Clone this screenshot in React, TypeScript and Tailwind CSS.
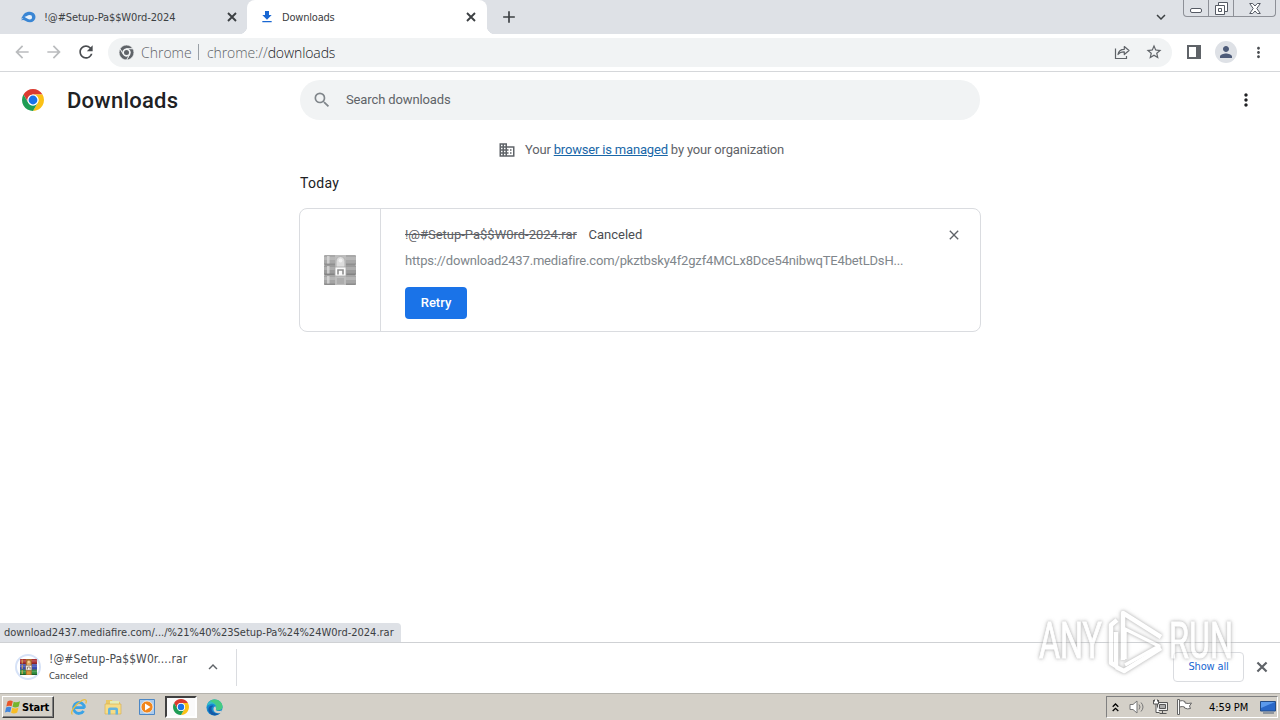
import React from "react";
import clsx from "clsx";
import {
  MdAdd,
  MdArrowBack,
  MdArrowForward,
  MdBusiness,
  MdClose,
  MdExpandLess,
  MdExpandMore,
  MdFileDownload,
  MdMoreVert,
  MdPerson,
  MdRefresh,
  MdSearch,
  MdStarBorder,
} from "react-icons/md";

const UI_FONT = "font-['DejaVu_Sans_Condensed','DejaVu_Sans',sans-serif] [font-stretch:condensed]";

const WEDGE = "M0-6H10.39A12 12 0 0 0-10.39-6L-5.2 3A6 6 0 0 1 0-6Z";

function ChromeLogo({ className, mono = false }: { className?: string; mono?: boolean }) {
  const colors = mono ? ["#5f6368", "#5f6368", "#5f6368"] : ["#db3b30", "#fbc116", "#1f9d55"];
  return (
    <svg viewBox="-12 -12 24 24" className={className}>
      {colors.map((color, i) => (
        <path
          key={i}
          d={WEDGE}
          fill={color}
          stroke={mono ? "#f1f3f4" : "none"}
          strokeWidth={mono ? 1.2 : 0}
          transform={`rotate(${i * 120})`}
        />
      ))}
      <circle r="6" fill={mono ? "#f1f3f4" : "#fff"} />
      <circle r={mono ? 4 : 4.8} fill={mono ? "#5f6368" : "#1a73e8"} />
    </svg>
  );
}

function BoldClose({ className }: { className?: string }) {
  return (
    <svg viewBox="0 0 14 14" className={className} fill="none" stroke="currentColor" strokeWidth="1.900">
      <path d="M3 3l8 8M11 3l-8 8" />
    </svg>
  );
}

function MediafireIcon() {
  return (
    <svg viewBox="0 0 16 12" className="h-3 w-4">
      <path
        d="M0 9.200C1.500 8.800 2.600 8 3.500 7.200L1 7.400C2.800 5.800 3 3.600 5 2.100 6.600.9 8.200.7 10 .7A5.500 5.300 0 0 1 10 11.300C6.600 11.300 5.300 9.400 3.400 9.100Z"
        fill="#3a86d4"
      />
      <path
        d="M4.500 5.800C6.500 5.800 7.200 4 9.900 4A2.200 2.200 0 0 1 9.900 8.400C8 8.400 7.200 7.200 5.800 6.800Z"
        fill="#e8f1fb"
      />
    </svg>
  );
}

// WinRAR stack of books held together by a belt
function RarIcon({ className, gray = false }: { className?: string; gray?: boolean }) {
  const rows = gray ? ["#a8a8a8", "#9b9b9b", "#a5a5a5"] : ["#a82f35", "#3b4db5", "#2b8a3c"];
  return (
    <svg viewBox="0 0 32 30" className={className}>
      {rows.map((color, i) => (
        <g key={color}>
          <rect x="0" y={i * 10} width="32" height="10" rx="1" fill={color} />
          <rect x="0" y={i * 10 + 2} width="32" height="3" fill="#fff" opacity=".18" />
          <rect x="0" y={i * 10 + 8.500} width="32" height="1.500" fill="#000" opacity={gray ? 0.15 : 0.4} />
          <rect x="3" y={i * 10 + 1} width="2.500" height="7.500" fill={gray ? "#d8d8d8" : "#d9b04d"} opacity=".8" />
        </g>
      ))}
      <rect x="11" y="0" width="11" height="30" fill={gray ? "#bdbdbd" : "#b5702c"} />
      <path d="M12 14V6a4.500 4.500 0 0 1 9 0v8" fill={gray ? "#dcdcdc" : "#e0a860"} stroke={gray ? "#b0b0b0" : "#7c4a1c"} />
      <circle cx="16.500" cy="5.500" r="2" fill={gray ? "#f0f0f0" : "#f6d9a0"} />
      <path d="M11 12h11v9H11z" fill={gray ? "#fafafa" : "#fbf7ee"} stroke={gray ? "#a6a6a6" : "#6b5a44"} strokeWidth=".8" />
      <path d="M14 19.500V15h5v4.500" fill="none" stroke={gray ? "#8f8f8f" : "#84705a"} strokeWidth="1.600" />
      <rect x="13" y="23" width="7" height="6" fill={gray ? "#adadad" : "#d9983d"} />
    </svg>
  );
}

function WindowButtons() {
  return (
    <div className="flex h-[17px] w-[93px] self-start rounded-b-[4px] border border-t-0 border-[#8d9097] bg-[#dee1e6]">
      <div className="flex w-[25px] items-end justify-center border-r border-[#8d9097] pb-[3px]">
        <div className="h-[5px] w-[12px] rounded-[2px] border border-[#555a64] bg-white" />
      </div>
      <div className="flex w-[25px] items-center justify-center border-r border-[#8d9097]">
        <svg viewBox="0 0 13 13" className="h-[13px] w-[13px]" fill="#fff" stroke="#555a64">
          <path d="M3.500.5h9v9h-9z" />
          <path d="M.5 3.500h9v9h-9z" />
          <path d="M3.500 6.500h3v3h-3z" />
        </svg>
      </div>
      <div className="flex flex-1 items-center justify-center">
        <svg viewBox="0 0 12 11" className="h-[11px] w-[12px]" fill="#fff" stroke="#555a64">
          <path d="M.7.5h3L6 3l2.300-2.500h3L7.800 5.500l3.500 5h-3L6 8l-2.300 2.500h-3l3.500-5z" />
        </svg>
      </div>
    </div>
  );
}

function TabStrip() {
  return (
    <div className={clsx("flex h-[34px] bg-[#dee1e6] text-[11px] text-[#3c4043]", UI_FONT)}>
      <div className="flex w-[247px] items-center pl-5">
        <MediafireIcon />
        <span className="ml-2 w-[181px] pt-0.5 whitespace-nowrap tracking-[-0.1px]">!@#Setup-Pa$$W0rd-2024</span>
        <BoldClose className="h-[14px] w-[14px]" />
      </div>
      <div className="relative flex w-60 items-center rounded-t-lg bg-white pl-3">
        <div className="absolute bottom-0 -left-2 h-2 w-2 bg-[radial-gradient(circle_at_0_0,#dee1e6_8px,white_8.500px)]" />
        <div className="absolute -right-2 bottom-0 h-2 w-2 bg-[radial-gradient(circle_at_100%_0,#dee1e6_8px,white_8.500px)]" />
        <MdFileDownload className="h-4 w-4 text-[#1967d2]" />
        <span className="ml-[7px] w-[182px] pt-0.5 tracking-[-0.2px]">Downloads</span>
        <BoldClose className="h-[14px] w-[14px]" />
      </div>
      <div className="flex flex-1 items-center pl-3">
        <MdAdd className="h-5 w-5 text-[#3c4043]" />
      </div>
      <MdExpandMore className="mt-2 mr-[13px] h-[18px] w-[18px] text-[#3c4043]" />
      <WindowButtons />
      <div className="w-1" />
    </div>
  );
}

function Toolbar() {
  return (
    <div className="flex h-[38px] items-center border-b border-[#d5d7da] bg-white pb-px pl-3 text-[#5f6368]">
      <MdArrowBack className="h-5 w-5 text-[#babcbe]" />
      <MdArrowForward className="ml-3 h-5 w-5 text-[#babcbe]" />
      <MdRefresh className="ml-3 h-5 w-5 text-[#4a4d51]" />
      <div className="ml-3 flex h-[29px] w-[1064px] items-center rounded-full bg-[#f1f3f4] pl-[11px] font-['Open_Sans',sans-serif] text-[14px]">
        <ChromeLogo mono className="h-[15px] w-[15px]" />
        <span className="ml-[7px] w-[50px] pt-px font-light">Chrome</span>
        <span className="ml-[7px] h-4 w-px bg-[#9aa0a6]" />
        <span className="ml-2 flex-1 pt-px font-light tracking-[-0.1px]">
          chrome://<span className="text-[#202124]">downloads</span>
        </span>
        <svg viewBox="0 0 16 16" className="mr-[15px] h-4 w-4" fill="none" stroke="currentColor" strokeWidth="1.200">
          <path d="M1.500 4.500v10h11V12" />
          <path d="M4 10.500C4.500 7 7 5.300 10.300 5.300V2.500L15 6.500l-4.700 4V7.800C7.500 7.700 5.500 8.500 4 10.500Z" strokeLinejoin="round" />
        </svg>
        <MdStarBorder className="mr-[9px] h-[18px] w-[18px]" />
      </div>
      <svg viewBox="0 0 14 14" className="ml-[15px] h-[14px] w-[14px]">
        <path d="M1 1h12v12H1z" fill="none" stroke="#5f6368" strokeWidth="2" />
        <path d="M9 0h5v14H9z" fill="#5f6368" />
      </svg>
      <div className="ml-[14px] flex h-[22px] w-[22px] items-center justify-center rounded-full bg-[#dee1e6]">
        <MdPerson className="h-[18px] w-[18px] text-[#4c5a78]" />
      </div>
      <MdMoreVert className="ml-[13px] h-[17px] w-[17px] text-[#4a4d51]" />
    </div>
  );
}

function PageHeader() {
  return (
    <div className="flex h-14 items-center pl-[22px]">
      <ChromeLogo className="h-[22px] w-[22px]" />
      <h1 className="ml-[23px] w-[233px] text-[22px] font-medium tracking-[0.25px] text-[#202124]">Downloads</h1>
      <div className="flex h-10 w-[680px] items-center rounded-full bg-[#f1f3f4] pl-3 text-[13px] text-[#5f6368]">
        <MdSearch className="h-5 w-5 text-[#80868b]" />
        <span className="ml-[14px] tracking-[-0.12px]">Search downloads</span>
      </div>
      <MdMoreVert className="ml-[256px] h-5 w-5 text-[#202124]" />
    </div>
  );
}

function DownloadItem() {
  return (
    <div className="mt-[15px] -ml-px flex h-[124px] w-[682px] rounded-lg border border-[#dadce0] text-[13px]">
      <div className="flex w-[81px] items-center justify-center border-r border-[#dadce0]">
        <RarIcon gray className="h-[30px] w-8" />
      </div>
      <div className="flex-1 pt-4 pl-6">
        <div className="flex h-5 items-center text-[#5f6368]">
          <span className="w-[183.500px] whitespace-nowrap tracking-[-0.01px] line-through">!@#Setup-Pa$$W0rd-2024.rar</span>
          <span className="text-[#4a4d51]">Canceled</span>
        </div>
        <div className="mt-1.5 h-5 w-[520px] leading-5 tracking-[-0.17px] whitespace-nowrap text-[#80868b]">
          https://download2437.mediafire.com/pkztbsky4f2gzf4MCLx8Dce54nibwqTE4betLDsH...
        </div>
        <button className="mt-4 h-8 w-[62px] rounded-[4px] bg-[#1a73e8] font-medium text-white">Retry</button>
      </div>
      <MdClose className="mt-[18px] mr-[18px] h-4 w-4 text-[#5f6368]" />
    </div>
  );
}

function DownloadShelf() {
  return (
    <div className={clsx("flex h-[51px] items-center border-t border-[#cfd1d4] bg-white pb-0.5 text-[#3c4043]", UI_FONT)}>
      <div className="ml-[15px] flex h-[26px] w-[26px] items-center justify-center rounded-full border-2 border-[#d6e2f7]">
        <RarIcon className="h-[16px] w-[17px]" />
      </div>
      <div className="ml-2 w-[157px]">
        <div className="text-[12px] leading-[17px] tracking-[0.1px] text-[#4a4d51]">!@#Setup-Pa$$W0r....rar</div>
        <div className="text-[9.500px] leading-4 tracking-[-0.1px]">Canceled</div>
      </div>
      <MdExpandLess className="-ml-0.5 h-[18px] w-[18px] text-[#5f6368]" />
      <div className="ml-3.5 h-[37px] w-px bg-[#dadce0]" />
      <button className="ml-auto h-[30px] w-[71px] rounded-[4px] border border-[#dadce0] text-[11px] tracking-[-0.15px] text-[#1967d2]">
        Show all
      </button>
      <BoldClose className="mr-2.5 ml-2.5 h-4 w-4 text-[#5f6368]" />
    </div>
  );
}

function Taskbar() {
  return (
    <div className={clsx("flex h-[27px] items-center border-t border-[#b5b3ad] bg-[#d4d0c8] text-[11px] text-black", UI_FONT)}>
      <div className="ml-0.5 flex h-[22px] w-[52px] items-center border border-t-white border-r-[#404040] border-b-[#404040] border-l-white pl-0.5 font-bold shadow-[inset_-1px_-1px_0_#808080]">
        <svg viewBox="0 0 16 16" className="h-4 w-4">
          <path d="M2.500 2.500C4.500 1 6.200 1.300 7.800 2.200L6.600 7.300C5 6.400 3.200 6.400 1.300 7.500Z" fill="#e8562a" />
          <path d="M8.700 2.700C10.500 3.600 12.700 3.600 15 2.300L13.700 7.500C11.500 8.700 9.400 8.600 7.500 7.800Z" fill="#74b52e" />
          <path d="M1.100 8.500C3 7.400 4.900 7.400 6.400 8.300L5.200 13.300C3.500 12.400 1.800 12.400 0 13.500Z" fill="#4186dd" />
          <path d="M7.300 8.800C9.200 9.600 11.300 9.700 13.500 8.500L12.200 13.600C10 14.700 8 14.700 6.100 13.800Z" fill="#f8bd25" />
        </svg>
        <span className="ml-px pt-0.5 tracking-[-0.2px]">Start</span>
      </div>
      {/* quick launch */}
      <svg viewBox="0 0 18 18" className="ml-4 h-[18px] w-[18px]" fill="none">
        <path d="M4 9.700H14.700M14.500 9.700A5.500 5.500 0 1 0 13.600 13" stroke="#3aa3e6" strokeWidth="2.800" />
        <path d="M2.500 16.300C-.5 15.500 4.500 6.500 11.500 2.700 15.500.8 17.300 1.700 15.800 5.500" stroke="#e7bd43" strokeWidth="1.300" />
      </svg>
      <svg viewBox="0 0 18 18" className="ml-4 h-[18px] w-[18px]">
        <path d="M2 2h6l1 2h7v6H2z" fill="#e9c765" />
        <path d="M6 3h9v5H6z" fill="#e4eeb8" />
        <path d="M1 6h16v10H1z" fill="#f6dc86" stroke="#d4ad4d" strokeWidth=".6" />
        <path d="M4 16.500v-5q0-2 2-2h6q2 0 2 2v5h-2.500V12h-5v4.500z" fill="#63b4df" />
      </svg>
      <svg viewBox="0 0 16 16" className="ml-[17px] h-4 w-4">
        <path d="M.5.5h15v15H.5z" fill="#abcbec" stroke="#4c87c5" />
        <circle cx="8" cy="8" r="6" fill="#f1861c" stroke="#fff" strokeWidth=".7" />
        <path d="M6 4.500 11.500 8 6 11.500z" fill="#fff" />
      </svg>
      <div className="ml-2.5 flex h-[22px] w-8 items-center justify-center border-2 border-t-[#404040] border-r-white border-b-white border-l-[#404040] bg-[#fafafa]">
        <ChromeLogo className="h-4 w-4" />
      </div>
      <svg viewBox="0 0 18 18" className="ml-[9px] h-[17px] w-[17px]">
        <circle cx="9" cy="9" r="8.500" fill="#168bd1" />
        <path d="M.6 8C1.500 3.500 5 .5 9 .5c5 0 8.500 3.500 8.500 7.500 0 3-2.500 4-5 4-2 0-2.500-1-1.800-2C11.500 7 8 4.500 5 5.300 3 5.800 1.300 6.700.6 8Z" fill="#35bfc5" />
        <path d="M9 .5c5 0 8.500 3.500 8.500 7.500 0 3-2.500 4-5 4-2 0-2.500-1-1.800-2C12 6 8 3 4 2.300 5.500 1 7 .5 9 .5Z" fill="#4fd065" opacity=".7" />
        <path d="M6.200 8.500C4.500 12.500 9 16.500 14.800 15.200 10 19.500 3 17 2.500 11.500 2.300 8 5.500 6 8 7.300Z" fill="#1459a7" />
        <path d="M10.700 10c-.7 1 0 2.300 1.800 2.700 2 .3 3.800-.2 5-1L16 14.500c-3 1.500-7 .5-8-2.500-.5-2 .5-4 2-4.200Z" fill="#d4d0c8" />
      </svg>
      <div className="mr-0.5 ml-auto flex h-[22px] w-[172px] items-center border border-t-[#808080] border-r-white border-b-white border-l-[#808080] pl-[5px]">
        <svg viewBox="0 0 7 9" className="h-[9px] w-[7px]" fill="none" stroke="#000" strokeWidth="1.300">
          <path d="M.7 3.700 3.500 1l2.800 2.700M.7 8l2.800-2.700L6.300 8" />
        </svg>
        <svg viewBox="0 0 17 16" className="ml-2.5 h-4 w-[17px]" fill="none" stroke="#777" strokeWidth="1">
          <path d="M1 5.500h3L8 2v12l-4-3.500H1z" fill="#fff" />
          <path d="M10 5.500q2 2.500 0 5M12 3.500q4 4.500 0 9" />
        </svg>
        <svg viewBox="0 0 17 16" className="ml-[6px] h-4 w-[17px]" fill="#eee" stroke="#555">
          <path d="M5.500 3.500h10v8h-10z" />
          <path d="M7.500 5.500h6v4h-6z" fill="#aaa" />
          <path d="M7.500 14.500h7M10.500 11.500v3" />
          <path d="M1.500 1v4h5V1M4 5v8.500h3.500M2.500.5v2M5.500.5v2" fill="#fff" />
        </svg>
        <svg viewBox="0 0 17 16" className="ml-[7px] h-4 w-[17px]" fill="#fff" stroke="#666">
          <path d="M3.500 2q3-1 5.500.5v1.500q3 1 6.500 0l-2 3 1 2.500q-3 1-6-.5V8q-2-1-5 0z" />
          <path d="M1.500.5h2v15h-2z" />
        </svg>
        <span className="ml-4 w-[41px] pt-0.5 whitespace-nowrap tracking-[-0.1px]">4:59 PM</span>
        <svg viewBox="0 0 16 14" className="ml-[10px] h-[14px] w-4 shrink-0">
          <path d="M.5 1.500h15v9.500h-15z" fill="#2968c8" stroke="#244d87" />
          <path d="M1 2h14L1 8z" fill="#5b9aec" />
          <path d="M3 12h11v2H3z" fill="#8f969e" />
        </svg>
      </div>
    </div>
  );
}

function Watermark() {
  return (
    <svg
      viewBox="0 0 216 76"
      className="pointer-events-none absolute top-[602px] left-[1028px] h-[76px] w-[216px] opacity-60 [filter:drop-shadow(0_0_1.500px_#888)_drop-shadow(0_0_2px_#ccc)]"
    >
      <g fill="#fff" stroke="#fff" strokeWidth="1" fontFamily="Roboto, sans-serif" fontSize="50">
        <text x="11" y="56" textLength="63" lengthAdjust="spacingAndGlyphs">ANY</text>
        <text x="141" y="56" textLength="64" lengthAdjust="spacingAndGlyphs">RUN</text>
      </g>
      <g fill="none" stroke="#fff" strokeWidth="4.500" strokeLinejoin="round">
        <path d="M89 18l-6 5v38l5 3V30" />
        <path d="M95 58V11l38 24" />
        <path d="M97 57V27l34 17-34 19" strokeWidth="3.500" />
        <path d="M88 65l8 4 37-23" />
      </g>
    </svg>
  );
}

export default function App() {
  return (
    <div className="relative flex h-[720px] w-[1280px] flex-col overflow-hidden bg-white font-[Roboto,sans-serif]">
      <TabStrip />
      <Toolbar />
      <main className="flex flex-1 flex-col">
        <PageHeader />
        <div className="mt-3 flex h-5 items-center pl-[498px] text-[13px] text-[#5f6368]">
          <MdBusiness className="h-[18px] w-[18px]" />
          <span className="ml-[9px] tracking-[-0.18px]">
            Your <a className="text-[#1967a8] underline">browser is managed</a> by your organization
          </span>
        </div>
        <div className="ml-[300px]">
          <h2 className="mt-[13px] h-5 text-[14px] leading-5 tracking-[0.3px] text-[#202124]">Today</h2>
          <DownloadItem />
        </div>
        <div className={clsx("mt-auto flex h-[19px] w-[401px] items-center rounded-tr-[4px] bg-[#dee1e6] pt-0.5 pl-1 text-[11px] whitespace-nowrap text-[#3c4043]", UI_FONT)}>
          download2437.mediafire.com/.../%21%40%23Setup-Pa%24%24W0rd-2024.rar
        </div>
      </main>
      <DownloadShelf />
      <Taskbar />
      <Watermark />
    </div>
  );
}
